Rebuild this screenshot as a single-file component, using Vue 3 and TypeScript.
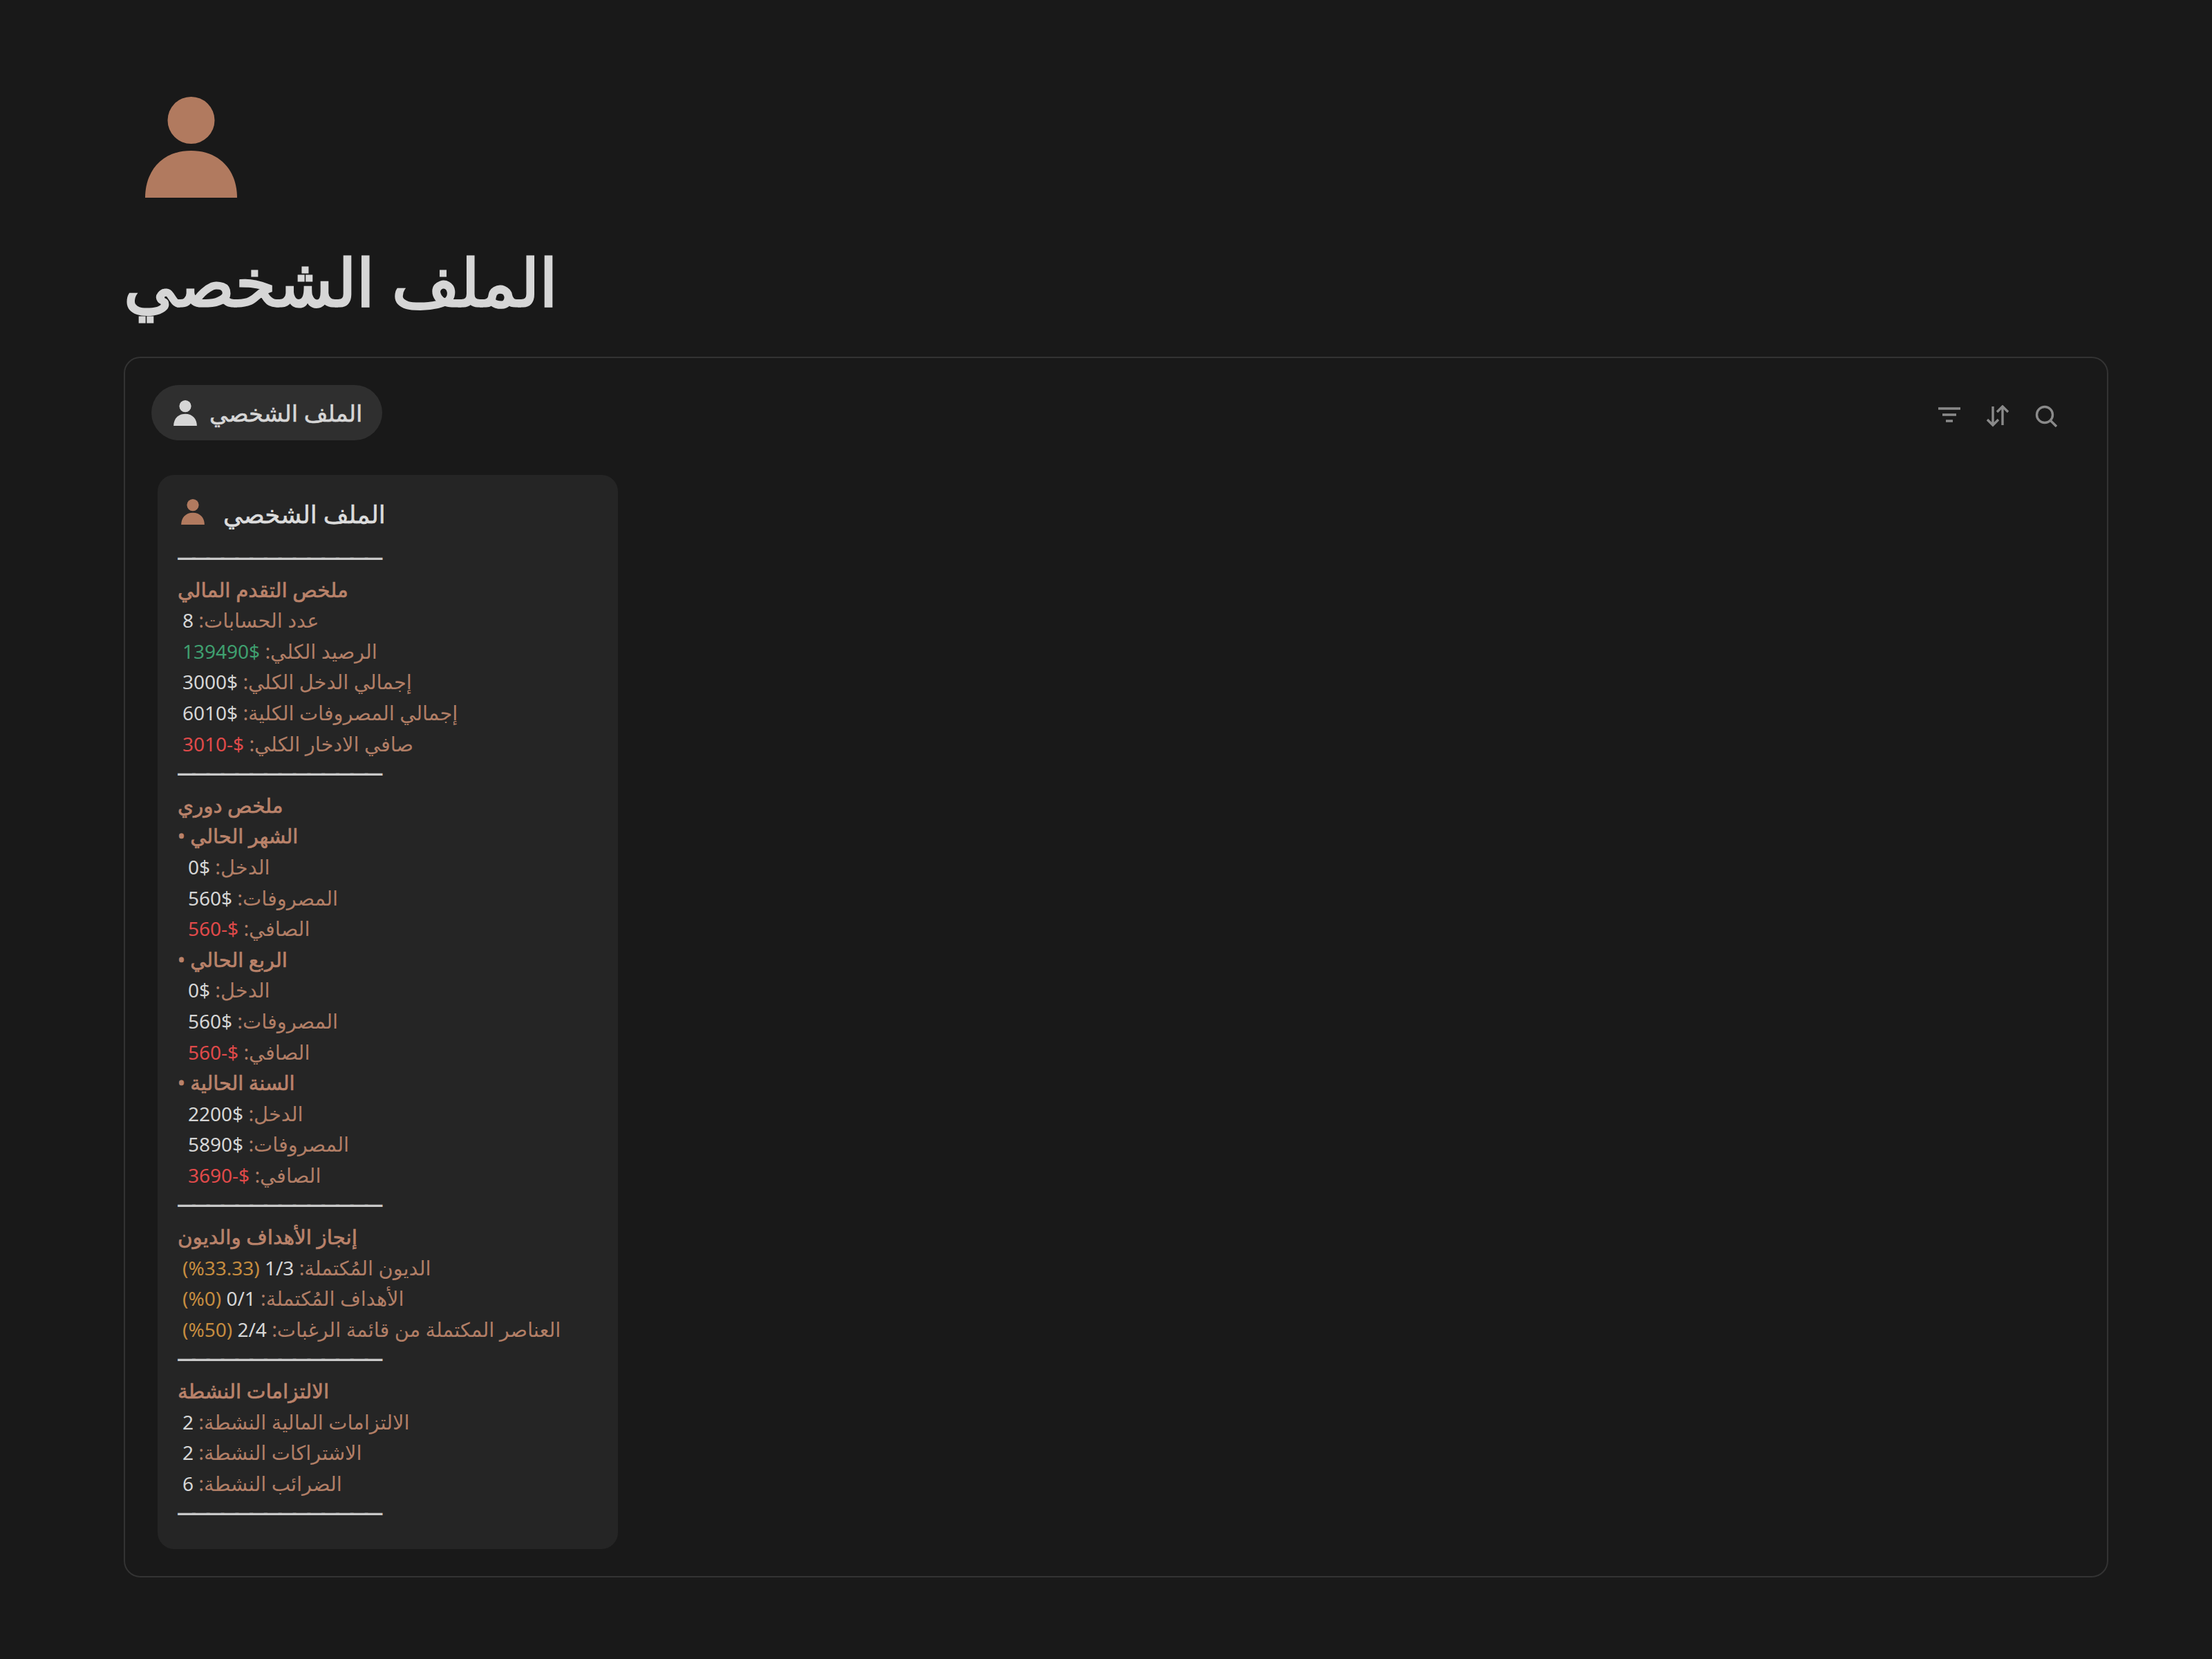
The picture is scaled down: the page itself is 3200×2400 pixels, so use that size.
<script setup lang="ts">
type Row = { kind: 'sep' | 'head' | 'sub' | 'row' | 'indent'; label?: string; value?: string; tone?: string; pct?: string }

const rows: Row[] = [
  { kind: 'sep' },
  { kind: 'head', label: 'ملخص التقدم المالي' },
  { kind: 'row', label: 'عدد الحسابات:', value: '8', tone: 'plain' },
  { kind: 'row', label: 'الرصيد الكلي:', value: '139490$', tone: 'green' },
  { kind: 'row', label: 'إجمالي الدخل الكلي:', value: '3000$', tone: 'plain' },
  { kind: 'row', label: 'إجمالي المصروفات الكلية:', value: '6010$', tone: 'plain' },
  { kind: 'row', label: 'صافي الادخار الكلي:', value: '3010-$', tone: 'red' },
  { kind: 'sep' },
  { kind: 'head', label: 'ملخص دوري' },
  { kind: 'sub', label: 'الشهر الحالي •' },
  { kind: 'indent', label: 'الدخل:', value: '0$', tone: 'plain' },
  { kind: 'indent', label: 'المصروفات:', value: '560$', tone: 'plain' },
  { kind: 'indent', label: 'الصافي:', value: '560-$', tone: 'red' },
  { kind: 'sub', label: 'الربع الحالي •' },
  { kind: 'indent', label: 'الدخل:', value: '0$', tone: 'plain' },
  { kind: 'indent', label: 'المصروفات:', value: '560$', tone: 'plain' },
  { kind: 'indent', label: 'الصافي:', value: '560-$', tone: 'red' },
  { kind: 'sub', label: 'السنة الحالية •' },
  { kind: 'indent', label: 'الدخل:', value: '2200$', tone: 'plain' },
  { kind: 'indent', label: 'المصروفات:', value: '5890$', tone: 'plain' },
  { kind: 'indent', label: 'الصافي:', value: '3690-$', tone: 'red' },
  { kind: 'sep' },
  { kind: 'head', label: 'إنجاز الأهداف والديون' },
  { kind: 'row', label: 'الديون المُكتملة:', value: '1/3', tone: 'plain', pct: '(%33.33)' },
  { kind: 'row', label: 'الأهداف المُكتملة:', value: '0/1', tone: 'plain', pct: '(%0)' },
  { kind: 'row', label: 'العناصر المكتملة من قائمة الرغبات:', value: '2/4', tone: 'plain', pct: '(%50)' },
  { kind: 'sep' },
  { kind: 'head', label: 'الالتزامات النشطة' },
  { kind: 'row', label: 'الالتزامات المالية النشطة:', value: '2', tone: 'plain' },
  { kind: 'row', label: 'الاشتراكات النشطة:', value: '2', tone: 'plain' },
  { kind: 'row', label: 'الضرائب النشطة:', value: '6', tone: 'plain' },
  { kind: 'sep' },
]
</script>

<template>
  <main class="page">
    <svg class="hero" viewBox="0 0 133 146" aria-hidden="true">
      <ellipse cx="66.5" cy="34" rx="34" ry="34" />
      <path d="M0 146C0 108 24 78 66.5 78S133 108 133 146Z" />
    </svg>
    <h1 class="title" dir="rtl">الملف الشخصي</h1>
    <section class="box">
      <div class="toolbar">
        <div class="pill">
          <svg class="pill-icon" viewBox="0 0 133 146" aria-hidden="true">
            <ellipse cx="66.5" cy="34" rx="34" ry="34" />
            <path d="M0 146C0 108 24 78 66.5 78S133 108 133 146Z" />
          </svg>
          <span dir="rtl" class="nowrap">الملف الشخصي</span>
        </div>
        <div class="tools">
          <svg class="tool" viewBox="0 0 32 32" aria-hidden="true">
            <path d="M0 5h32M6 14h20M11 23h10" />
          </svg>
          <svg class="tool" viewBox="0 0 32 32" aria-hidden="true">
            <path d="M9 2v27M1 21l8 8 8-8M23 29V2M15 10l8-8 8 8" />
          </svg>
          <svg class="tool" viewBox="0 0 32 32" aria-hidden="true">
            <circle cx="14" cy="14" r="11.5" />
            <path d="M22 22l9 9" />
          </svg>
        </div>
      </div>
      <article class="card">
        <header class="card-head">
          <svg class="card-icon" viewBox="0 0 133 146" aria-hidden="true">
            <ellipse cx="66.5" cy="34" rx="34" ry="34" />
            <path d="M0 146C0 108 24 78 66.5 78S133 108 133 146Z" />
          </svg>
          <span dir="rtl">الملف الشخصي</span>
        </header>
        <template v-for="(r, i) in rows" :key="i">
          <div v-if="r.kind === 'sep'" class="line sep">——————————————</div>
          <div v-else class="line" :class="r.kind" dir="rtl">
            <span class="label">{{ r.label }}</span>
            <template v-if="r.value">
              {{ ' ' }}<bdi dir="ltr" class="val" :class="r.tone">{{ r.value }}</bdi>
            </template>
            <template v-if="r.pct">
              {{ ' ' }}<bdi dir="ltr" class="val orange">{{ r.pct }}</bdi>
            </template>
          </div>
        </template>
      </article>
    </section>
  </main>
</template>

<style scoped>
.page {
  box-sizing: border-box;
  width: 3200px;
  height: 2400px;
  padding: 140px 150px 0 179px;
  background: #191919;
  font-family: "Noto Sans", "DejaVu Sans", sans-serif;
}
.hero {
  display: block;
  width: 133px;
  height: 146px;
  margin-left: 31px;
  fill: #b17a5f;
}
.title {
  margin: 60px 0 0;
  height: 170px;
  line-height: 120px;
  font-size: 95px;
  font-weight: 400;
  -webkit-text-stroke: 3px #d6d6d6;
  color: #d6d6d6;
  text-align: left;
}
.box {
  box-sizing: border-box;
  height: 1766px;
  border: 2px solid #333;
  border-radius: 24px;
  padding: 39px 0 0 38px;
}
.toolbar {
  display: flex;
  justify-content: space-between;
  align-items: center;
  height: 80px;
  padding-right: 72px;
}
.pill {
  display: flex;
  align-items: center;
  gap: 18px;
  box-sizing: border-box;
  width: 334px;
  height: 80px;
  padding: 0 32px;
  border-radius: 40px;
  background: #2f2f2f;
  font-size: 33.5px;
  -webkit-text-stroke: 0.6px #d6d6d6;
  color: #d6d6d6;
}
.nowrap {
  white-space: nowrap;
}
.pill-icon {
  flex: none;
  width: 34px;
  height: 37px;
  fill: #d6d6d6;
}
.tools {
  display: flex;
  gap: 38px;
  margin-top: 10px;
}
.tool {
  width: 32px;
  height: 32px;
  fill: none;
  stroke: #8a8a8a;
  stroke-width: 3.4;
}
.card {
  box-sizing: border-box;
  width: 666px;
  height: 1554px;
  margin: 50px 0 0 9px;
  padding: 28px 29px 0;
  border-radius: 24px;
  background: #252525;
  font-size: 28px;
  line-height: 44.6px;
  color: #b17e66;
}
.card-head {
  display: flex;
  align-items: center;
  gap: 27px;
  height: 56px;
  margin-bottom: 15px;
  padding-left: 5px;
  font-size: 35.5px;
  -webkit-text-stroke: 0.6px #dcdcdc;
  color: #dcdcdc;
}
.card-icon {
  width: 34px;
  height: 37px;
  margin-top: -6px;
  fill: #b17a5f;
}
.line {
  height: 44.6px;
  text-align: left;
  white-space: nowrap;
}
.label {
  font-size: 28.8px;
}
.sep {
  margin-left: -1px;
  line-height: 38.6px;
  color: #c9c9c9;
  font-weight: 700;
  letter-spacing: -7.2px;
}
.head, .sub {
  -webkit-text-stroke: 0.7px #b9826a;
  color: #b9826a;
}
.head .label {
  font-size: 29.4px;
}
.row {
  padding-left: 7px;
}
.indent {
  padding-left: 15px;
}
.val {
  unicode-bidi: isolate;
}
.plain { color: #d6d6d6; }
.green { color: #3f9f6f; }
.red { color: #e04a4a; }
.orange { color: #c58c3f; }
</style>
